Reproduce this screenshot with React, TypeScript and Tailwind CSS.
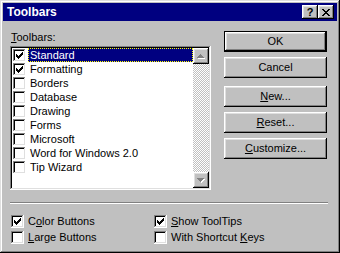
import React from "react";

const raised =
  "shadow-[inset_-1px_-1px_#000,inset_1px_1px_#dfdfdf,inset_-2px_-2px_#808080,inset_2px_2px_#fff]";
const button =
  "shadow-[inset_-1px_-1px_#000,inset_1px_1px_#fff,inset_-2px_-2px_#808080,inset_2px_2px_#dfdfdf]";
const defaultButton =
  "shadow-[inset_0_0_0_1px_#000,inset_-2px_-2px_#000,inset_2px_2px_#fff,inset_-3px_-3px_#808080,inset_3px_3px_#dfdfdf]";
const sunken =
  "shadow-[inset_-1px_-1px_#fff,inset_1px_1px_#808080,inset_-2px_-2px_#dfdfdf,inset_2px_2px_#000]";

const toolbars = [
  { name: "Standard", checked: true },
  { name: "Formatting", checked: true },
  { name: "Borders", checked: false },
  { name: "Database", checked: false },
  { name: "Drawing", checked: false },
  { name: "Forms", checked: false },
  { name: "Microsoft", checked: false },
  { name: "Word for Windows 2.0", checked: false },
  { name: "Tip Wizard", checked: false },
];

// Win95 style 7x7 check mark, drawn column by column
const CheckMark = () => (
  <svg width="7" height="7" viewBox="0 0 7 7" shapeRendering="crispEdges">
    {[2, 3, 4, 3, 2, 1, 0].map((y, x) => (
      <rect key={x} x={x} y={y} width="1" height="3" fill="#000" />
    ))}
  </svg>
);

const CheckBox = ({ checked }: { checked: boolean }) => (
  <span
    className={`w-[13px] h-[13px] shrink-0 bg-white flex items-center justify-center ${sunken}`}
  >
    {checked && <CheckMark />}
  </span>
);

// greyed-out scroll arrow with its white etched shadow
const Arrow = ({ down }: { down?: boolean }) => {
  const rows = [
    [3, 1],
    [2, 3],
    [1, 5],
    [0, 7],
  ];
  const shape = (dx: number, dy: number, fill: string) =>
    rows.map(([x, w], i) => (
      <rect
        key={`${fill}-${i}`}
        x={x + dx}
        y={(down ? 3 - i : i) + dy}
        width={w}
        height="1"
        fill={fill}
      />
    ));
  return (
    <svg width="8" height="5" viewBox="0 0 8 5" shapeRendering="crispEdges">
      {shape(1, 1, "#fff")}
      {shape(0, 0, "#808080")}
    </svg>
  );
};

const CloseGlyph = () => {
  const rows = [
    [0, 1, 6, 7],
    [1, 2, 5, 6],
    [2, 3, 4, 5],
    [3, 4],
    [2, 3, 4, 5],
    [1, 2, 5, 6],
    [0, 1, 6, 7],
  ];
  return (
    <svg width="8" height="7" viewBox="0 0 8 7" shapeRendering="crispEdges">
      {rows.flatMap((xs, y) =>
        xs.map((x) => (
          <rect key={`${x}-${y}`} x={x} y={y} width="1" height="1" fill="#000" />
        )),
      )}
    </svg>
  );
};

const DialogButton = ({
  children,
  isDefault,
  className = "",
}: {
  children: React.ReactNode;
  isDefault?: boolean;
  className?: string;
}) => (
  <div
    className={`h-[21px] w-[103px] bg-[#c0c0c0] flex items-center justify-center text-black ${
      isDefault ? defaultButton : button
    } ${className}`}
  >
    {children}
  </div>
);

const Option = ({
  checked,
  children,
}: {
  checked: boolean;
  children: React.ReactNode;
}) => (
  <div className="h-[16px] flex items-center gap-[4px]">
    <CheckBox checked={checked} />
    <span className="leading-[16px]">{children}</span>
  </div>
);

const U = ({ children }: { children: React.ReactNode }) => (
  <span className="underline underline-offset-[1px]">{children}</span>
);

export default function App() {
  return (
    <div
      className={`w-[340px] h-[253px] bg-[#c0c0c0] p-[3px] text-[11px] text-black font-['Liberation_Sans',Arial,sans-serif] ${raised}`}
    >
      {/* title bar */}
      <div className="h-[18px] bg-[#000080] flex items-center pl-[4px] pr-[3px]">
        <span className="text-white font-bold text-[12px] leading-[18px] flex-1">
          Toolbars
        </span>
        <div
          className={`w-[16px] h-[14px] bg-[#c0c0c0] flex items-center justify-center font-bold text-[11px] leading-none ${button}`}
        >
          ?
        </div>
        <div
          className={`w-[16px] h-[14px] bg-[#c0c0c0] flex items-center justify-center ${button}`}
        >
          <CloseGlyph />
        </div>
      </div>

      <div className="pt-[10px] pl-[7px] pr-[9px]">
        <div className="flex">
          <div className="w-[201px] flex flex-col">
            <div className="h-[13px] leading-[13px] pl-[1px]">
              <U>T</U>oolbars:
            </div>
            <div className={`mt-[2px] h-[144px] bg-white p-[2px] flex ${sunken}`}>
              <div className="flex-1 flex flex-col">
                {toolbars.map((t, i) => (
                  <div key={t.name} className="h-[14px] flex items-center pl-[1px]">
                    <CheckBox checked={t.checked} />
                    <span
                      className={`ml-[2px] flex-1 h-[14px] leading-[12px] pl-[1px] border border-dotted ${
                        i === 0
                          ? "bg-[#000080] text-white border-[#ffff00]"
                          : "border-transparent"
                      }`}
                    >
                      {t.name}
                    </span>
                  </div>
                ))}
              </div>
              <div className="w-[16px] flex flex-col">
                <div
                  className={`h-[16px] bg-[#c0c0c0] flex items-center justify-center ${button}`}
                >
                  <Arrow />
                </div>
                <div className="flex-1 bg-[repeating-conic-gradient(#fff_0%_25%,#c0c0c0_0%_50%)] bg-[length:2px_2px]" />
                <div
                  className={`h-[16px] bg-[#c0c0c0] flex items-center justify-center ${button}`}
                >
                  <Arrow down />
                </div>
              </div>
            </div>
          </div>

          <div className="ml-[13px] flex flex-col">
            <DialogButton isDefault>OK</DialogButton>
            <DialogButton className="mt-[5px]">Cancel</DialogButton>
            <DialogButton className="mt-[8px]">
              <span>
                <U>N</U>ew...
              </span>
            </DialogButton>
            <DialogButton className="mt-[5px]">
              <span>
                <U>R</U>eset...
              </span>
            </DialogButton>
            <DialogButton className="mt-[5px]">
              <span>
                <U>C</U>ustomize...
              </span>
            </DialogButton>
          </div>
        </div>

        <div className="mt-[12px] h-[2px] border-t border-[#808080] border-b-white border-b" />

        <div className="mt-[9px] pl-[1px] grid grid-cols-[143px_1fr]">
          <Option checked>
            C<U>o</U>lor Buttons
          </Option>
          <Option checked>
            <U>S</U>how ToolTips
          </Option>
          <Option checked={false}>
            <U>L</U>arge Buttons
          </Option>
          <Option checked={false}>
            With Shortcut <U>K</U>eys
          </Option>
        </div>
      </div>
    </div>
  );
}
